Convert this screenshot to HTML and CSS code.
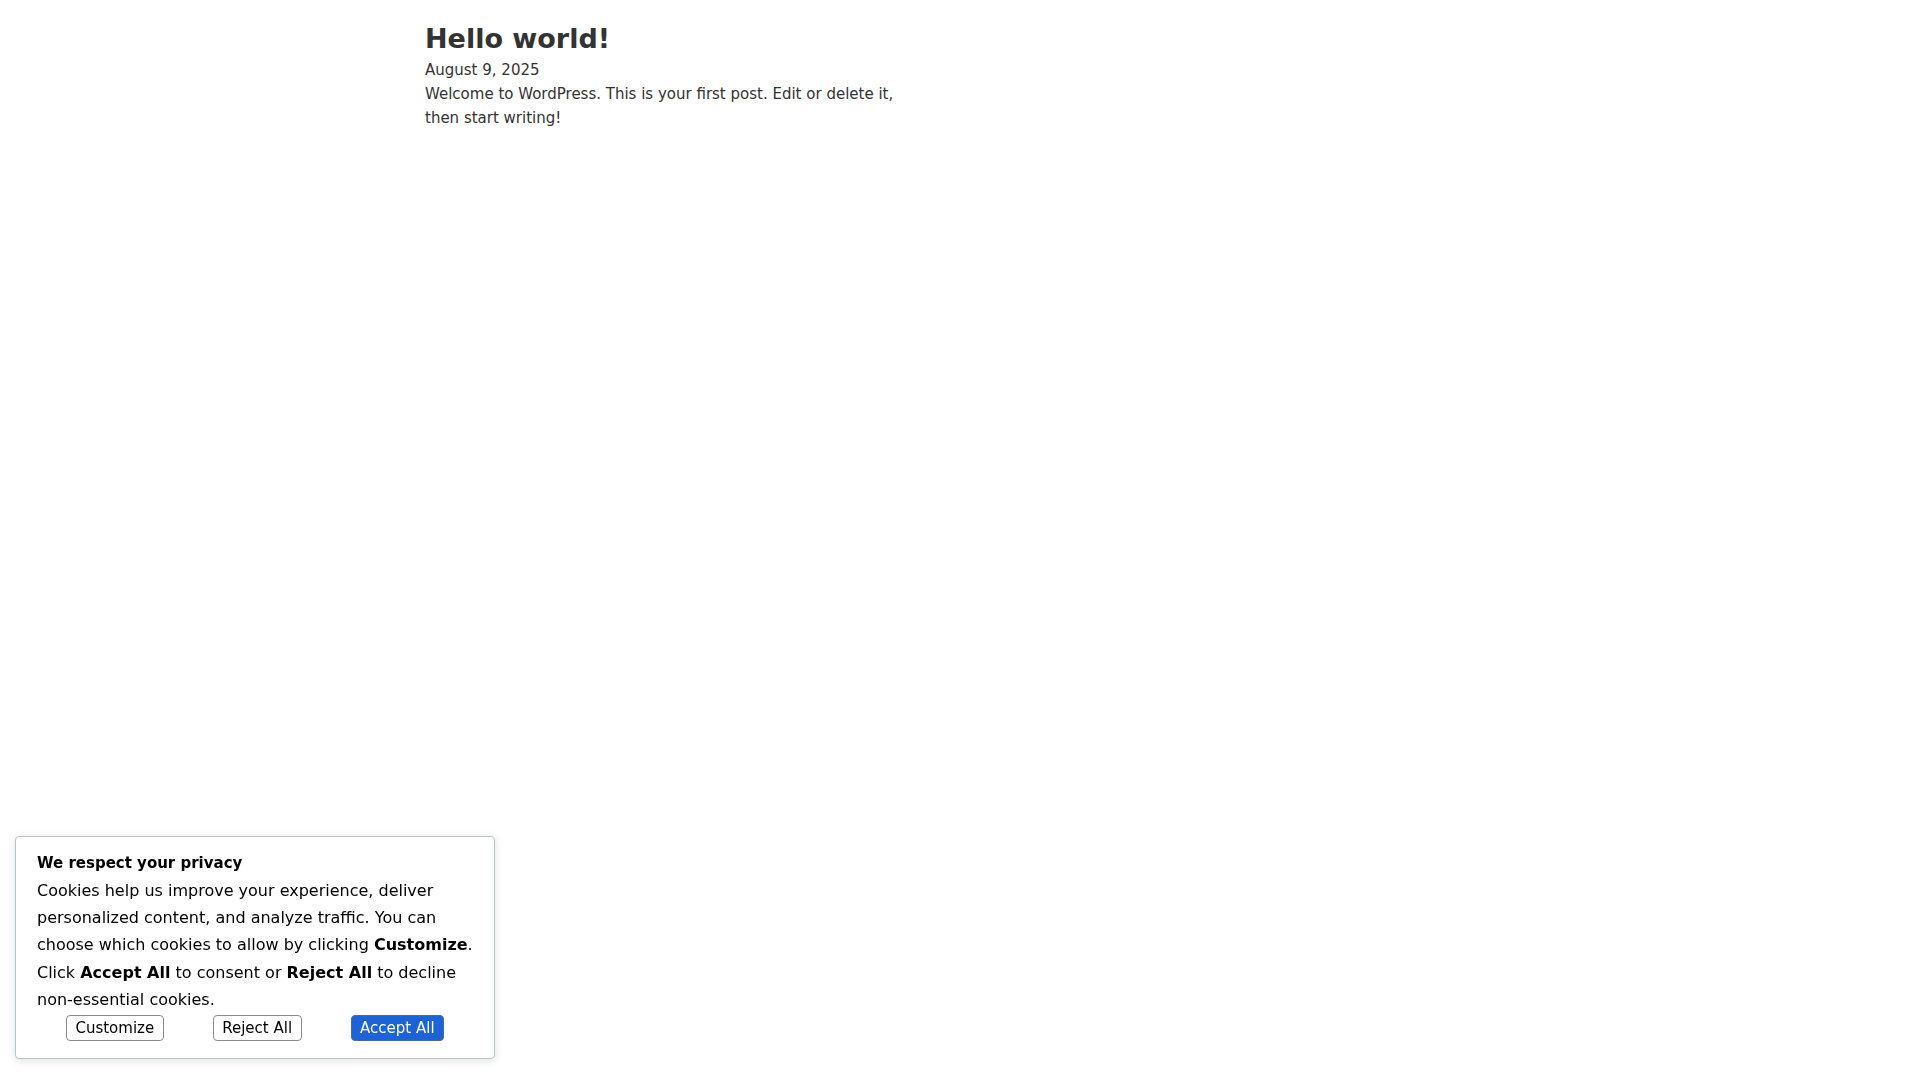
FILE: index.html
```html
<!DOCTYPE html>
<html lang="en">
<head>
<meta charset="utf-8">
<title>Hello world!</title>
<link rel="stylesheet" href="styles.css">
</head>
<body>
<main class="site">
  <article class="post">
    <h1 class="post-title">Hello world!</h1>
    <div class="post-date">August 9, 2025</div>
    <p class="post-body">Welcome to WordPress. This is your first post. Edit or delete it, then start writing!</p>
  </article>
</main>
<div class="consent" role="dialog" aria-label="Cookie consent">
  <div class="consent-title">We respect your privacy</div>
  <p class="consent-text">Cookies help us improve your experience, deliver personalized content, and analyze traffic. You can choose which cookies to allow by clicking <b>Customize</b>. Click <b>Accept All</b> to consent or <b>Reject All</b> to decline non-essential cookies.</p>
  <div class="consent-actions">
    <button class="btn">Customize</button>
    <button class="btn">Reject All</button>
    <button class="btn btn-primary">Accept All</button>
  </div>
</div>
</body>
</html>
```
FILE: styles.css
```css
html, body {
  margin: 0;
  padding: 0;
  background: #fff;
}
body {
  font-family: "DejaVu Sans", sans-serif;
  color: #333;
}
.site {
  padding: 23px 0 0 425px;
}
.post {
  width: 480px;
}
.post-title {
  margin: 0 0 3px;
  font-size: 27px;
  line-height: 1.2;
  font-weight: bold;
  color: #333;
}
.post-date,
.post-body {
  font-size: 15px;
  line-height: 24px;
}
.post-body {
  margin: 0;
}
.consent {
  position: fixed;
  left: 15px;
  bottom: 21px;
  width: 480px;
  box-sizing: border-box;
  padding: 13px 20px 17px 21px;
  background: #fff;
  border: 1px solid #b9c3cf;
  border-radius: 4px;
  box-shadow: 0 2px 10px rgba(0, 0, 0, 0.12);
  color: #000;
}
.consent-title {
  font-size: 15px;
  font-weight: bold;
  line-height: 27px;
}
.consent-text {
  margin: 0 0 2px;
  font-size: 16px;
  line-height: 1.7;
}
.consent-actions {
  display: flex;
  justify-content: center;
  gap: 49px;
  padding-right: 1px;
}
.btn {
  font-family: "DejaVu Sans", sans-serif;
  font-size: 15px;
  height: 26px;
  padding: 0 8.5px;
  line-height: 24px;
  border: 1px solid #8a8a8a;
  border-radius: 4px;
  background: #fff;
  color: #000;
}
.btn-primary {
  background: #1b63d8;
  border-color: #4a6a9a;
  color: #fff;
}
```
